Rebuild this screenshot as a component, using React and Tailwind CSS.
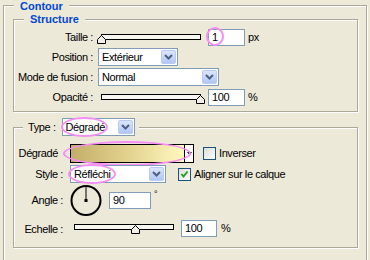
import React from 'react';

const Chevron = () => (
  <svg width="9" height="6" viewBox="0 0 9 6">
    <path d="M1 1 L4.5 4.5 L8 1" fill="none" stroke="#4d6185" strokeWidth="2" />
  </svg>
);

const Select = ({ value, className, children }) => (
  <div className={`relative flex h-[18px] shrink-0 items-center border border-[#7f9db9] bg-white ${className}`}>
    <span className="flex-1 pl-[3px]">{value}</span>
    <span className="mr-[1px] flex h-[14px] w-[15px] items-center justify-center rounded-[2px] border border-[#b9cbf3] bg-gradient-to-b from-[#dce6fc] to-[#b1c6f4]">
      <Chevron />
    </span>
    {children}
  </div>
);

const Field = ({ value, className, children }) => (
  <div className={`relative flex h-[17px] shrink-0 items-center border border-[#7f9db9] bg-white pl-[3px] ${className}`}>
    {value}
    {children}
  </div>
);

const Thumb = ({ left }) => (
  <svg className="absolute top-[4px]" style={{ left }} width="9" height="9" viewBox="0 0 9 9">
    <path d="M0.5 8.5 V4.5 L4.5 0.5 L8.5 4.5 V8.5 Z" fill="#f1efe6" stroke="#000" strokeWidth="1" />
  </svg>
);

const Slider = ({ pos, className }) => (
  <div className={`relative h-[12px] w-[108px] shrink-0 ${className}`}>
    <div className="mx-[4px] mt-[3px] h-[6px] border border-black bg-[#f7f6ef]" />
    <Thumb left={pos} />
  </div>
);

const Check = ({ checked }) => (
  <div className="flex h-[13px] w-[13px] shrink-0 items-center justify-center border border-[#1c5180] bg-gradient-to-br from-[#dcdcd7] to-white">
    {checked && (
      <svg width="9" height="9" viewBox="0 0 9 9">
        <path d="M1.5 4 L3.5 6.5 L7.5 1.5" fill="none" stroke="#21a121" strokeWidth="2" />
      </svg>
    )}
  </div>
);

const Ring = ({ className }) => (
  <span className={`pointer-events-none absolute rounded-[50%] border-2 border-[#f48ef4] ${className}`} />
);

const Label = ({ children, className }) => (
  <div className={`flex shrink-0 justify-end whitespace-nowrap ${className}`}>{children}</div>
);

const box = 'border border-[#aca899] shadow-[1px_1px_0_#fff,inset_1px_1px_0_#fff]';

export default function App() {
  return (
    <div className="h-[260px] w-[370px] overflow-hidden bg-[#ece9d8] font-['Liberation_Sans',Arial,sans-serif] text-[11px] leading-none tracking-[-0.4px] text-black">
      <div className={`ml-[3px] mt-[5px] h-[270px] w-[364px] ${box}`}>
        <div className="-mt-[6px] ml-[10px] h-[13px] w-fit bg-[#ece9d8] px-[6px] text-[11px] font-bold leading-[13px] tracking-[0px] text-[#0046d5]">
          Contour
        </div>

        {/* Structure */}
        <div className={`ml-[9px] mt-[6px] h-[93px] w-[345px] ${box}`}>
          <div className="-mt-[7px] ml-[10px] h-[13px] w-fit bg-[#ece9d8] px-[6px] font-bold leading-[13px] tracking-[0px] text-[#0046d5]">
            Structure
          </div>
          <div className="mt-[1px] flex h-[20px] items-center">
            <Label className="w-[79px]">Taille :</Label>
            <Slider pos={0} className="ml-[4px]" />
            <Field value="1" className="ml-[3px] w-[37px]">
              <Ring className="-left-[3px] -top-[3px] h-[19px] w-[18px]" />
            </Field>
            <span className="ml-[3px]">px</span>
          </div>
          <div className="flex h-[20px] items-center">
            <Label className="w-[79px]">Position :</Label>
            <Select value="Extérieur" className="ml-[5px] w-[80px]" />
          </div>
          <div className="flex h-[20px] items-center">
            <Label className="w-[79px]">Mode de fusion :</Label>
            <Select value="Normal" className="ml-[5px] w-[121px]" />
          </div>
          <div className="flex h-[20px] items-center">
            <Label className="w-[79px]">Opacité :</Label>
            <Slider pos={99} className="ml-[4px]" />
            <Field value="100" className="ml-[3px] w-[37px]" />
            <span className="ml-[3px]">%</span>
          </div>
        </div>

        {/* Type */}
        <div className={`ml-[9px] mt-[15px] h-[121px] w-[345px] ${box}`}>
          <div className="-mt-[10px] ml-[9px] flex h-[18px] w-fit items-center bg-[#ece9d8] pl-[5px] pr-[4px]">
            <span>Type :</span>
            <Select value="Dégradé" className="ml-[6px] w-[73px]">
              <Ring className="-left-[2px] -top-[2px] h-[20px] w-[47px]" />
            </Select>
          </div>

          <div className="mt-[8px] flex h-[19px] items-center">
            <Label className="w-[49px] pr-[5px]">Dégradé</Label>
            <div className="relative ml-[7px] flex h-[19px] w-[124px] shrink-0 border border-black bg-white">
              <div className="flex-1 bg-gradient-to-r from-[#c3ae68] via-[#e2d28f] to-[#fff8be]" />
              <div className="flex w-[9px] items-center justify-center border-l border-black">
                <svg width="5" height="3" viewBox="0 0 5 3">
                  <path d="M0 0 H5 L2.5 3 Z" fill="#000" />
                </svg>
              </div>
              <Ring className="-left-[8px] -top-[4px] h-[25px] w-[128px]" />
            </div>
            <div className="ml-[9px]">
              <Check />
            </div>
            <span className="ml-[3px]">Inverser</span>
          </div>

          <div className="mt-[2px] flex h-[18px] items-center">
            <Label className="w-[49px]">Style :</Label>
            <Select value="Réfléchi" className="ml-[7px] w-[96px]">
              <Ring className="-left-[3px] -top-[2px] h-[20px] w-[48px]" />
            </Select>
            <div className="ml-[12px]">
              <Check checked />
            </div>
            <span className="ml-[3px]">Aligner sur le calque</span>
          </div>

          <div className="mt-[1px] flex h-[33px] items-center">
            <Label className="w-[49px]">Angle :</Label>
            <svg className="ml-[7px] shrink-0" width="32" height="33" viewBox="0 0 32 33">
              <circle cx="16" cy="16.5" r="14.5" fill="none" stroke="#000" strokeWidth="2" />
              <line x1="16" y1="2" x2="16" y2="16" stroke="#000" strokeWidth="1" />
              <rect x="14.5" y="15" width="3" height="3" fill="#000" />
            </svg>
            <Field value="90" className="ml-[7px] w-[42px]" />
            <span className="ml-[3px] self-start pt-[6px] text-[9px]">°</span>
          </div>

          <div className="mt-[3px] flex h-[18px] items-start">
            <Label className="w-[49px] pt-[4px]">Echelle :</Label>
            <Slider pos={61} className="ml-[7px] mt-[1px]" />
            <Field value="100" className="ml-[3px] w-[36px]" />
            <span className="ml-[4px] pt-[3px]">%</span>
          </div>
        </div>
      </div>
    </div>
  );
}
